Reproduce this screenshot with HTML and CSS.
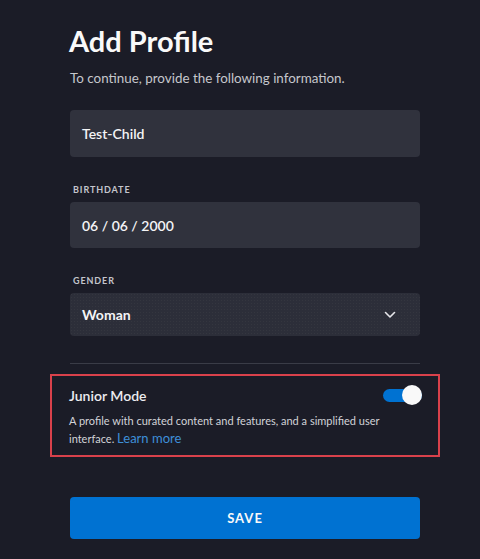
FILE: index.html
```html
<!DOCTYPE html>
<html lang="en">
<head>
    <meta charset="UTF-8">
    <meta name="viewport" content="width=device-width, initial-scale=1.0">
    <title>Add Profile</title>
    <link rel="stylesheet" href="styles.css">
</head>
<body>
    <div class="profile-form">
        <h1>Add Profile</h1>
        <p class="intro">To continue, provide the following information.</p>

        <div class="field first">
            <div class="field-box name-box">Test-Child</div>
        </div>

        <div class="field">
            <label class="field-label">BIRTHDATE</label>
            <div class="field-box">06 / 06 / 2000</div>
        </div>

        <div class="field">
            <label class="field-label">GENDER</label>
            <div class="field-box select-box">
                <span>Woman</span>
                <svg class="chevron" width="12" height="8" viewBox="0 0 12 8">
                    <path d="M1.5 1.5 L6 6 L10.5 1.5" fill="none" stroke="#e6e6ea" stroke-width="1.6" stroke-linecap="round" stroke-linejoin="round"/>
                </svg>
            </div>
        </div>

        <div class="divider"></div>

        <div class="junior-box">
            <div class="junior-head">
                <span class="junior-title">Junior Mode</span>
                <span class="toggle"><span class="knob"></span></span>
            </div>
            <p class="junior-desc">A profile with curated content and features, and a simplified user interface. <a href="#">Learn more</a></p>
        </div>

        <button class="save-btn">SAVE</button>
    </div>
</body>
</html>
```

FILE: styles.css
```css
body {
    margin: 0;
    background-color: #1b1c27;
    font-family: Lato, "Open Sans", sans-serif;
    color: #f9f9f9;
}
.profile-form {
    width: 350px;
    margin-left: 70px;
    padding-top: 24px;
}
h1 {
    margin: 0;
    font-size: 29px;
    line-height: 34px;
    font-weight: 700;
    margin-left: -1px;
}
.intro {
    margin: 11px 0 0;
    font-size: 13.4px;
    line-height: 18px;
    color: #c6c7cc;
}
.field {
    margin-top: 27px;
}
.field.first {
    margin-top: 23px;
}
.field-label {
    display: block;
    font-size: 9px;
    line-height: 12px;
    font-weight: 700;
    letter-spacing: 0.9px;
    color: #c4c5cc;
    padding-left: 3px;
    margin-bottom: 6px;
}
.field-box {
    height: 46px;
    box-sizing: border-box;
    background-color: #30323d;
    border-radius: 4px;
    padding: 0 12px;
    display: flex;
    align-items: center;
    font-size: 14px;
    font-weight: 600;
    color: #f4f4f6;
}
.field-box.name-box {
    height: 47px;
}
.field-box.select-box {
    height: 43px;
    justify-content: space-between;
    background-color: #2c2e39;
    background-image: radial-gradient(#34363f 0.6px, transparent 0.8px);
    background-size: 3px 3px;
    font-weight: 700;
}
.chevron {
    margin-right: 12px;
}
.divider {
    margin-top: 27px;
    height: 1px;
    background-color: #3a3c47;
}
.junior-box {
    margin: 10px -20px 0;
    border: 2px solid #d9414b;
    padding: 9px 16px 7px 17px;
}
.junior-head {
    display: flex;
    justify-content: space-between;
    align-items: center;
    height: 20px;
}
.junior-title {
    font-size: 14px;
    font-weight: 600;
    color: #ececf0;
}
.toggle {
    position: relative;
    width: 39px;
    height: 13px;
    border-radius: 7px;
    background-color: #0072d2;
}
.knob {
    position: absolute;
    right: 0;
    top: -4px;
    width: 20px;
    height: 20px;
    border-radius: 50%;
    background-color: #f9f9f9;
}
.junior-desc {
    margin: 7px 0 0;
    font-size: 11px;
    line-height: 18px;
    color: #d2d3d8;
    padding-right: 30px;
}
.junior-desc a {
    color: #3e8fd8;
    font-size: 13px;
    line-height: 16px;
    text-decoration: none;
}
.save-btn {
    display: block;
    width: 100%;
    height: 42px;
    margin-top: 40px;
    border: none;
    border-radius: 4px;
    background-color: #0072d2;
    color: #f9f9f9;
    font-family: Lato, "Open Sans", sans-serif;
    font-size: 13px;
    font-weight: 700;
    letter-spacing: 1px;
}
```
